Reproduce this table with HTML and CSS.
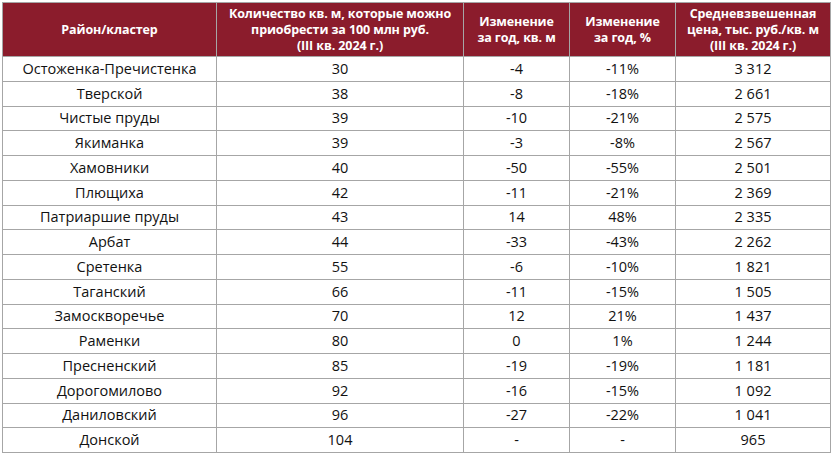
FILE: index.html
```html
<!DOCTYPE html>
<html lang="ru">
<head>
<meta charset="utf-8">
<link rel="stylesheet" href="styles.css">
</head>
<body>
<table class="tbl">
  <colgroup>
    <col class="c1"><col class="c2"><col class="c3"><col class="c4"><col class="c5">
  </colgroup>
  <thead>
    <tr>
      <th>Район/кластер</th>
      <th>Количество кв. м, которые можно<br>приобрести за 100 млн руб.<br>(III кв. 2024 г.)</th>
      <th>Изменение<br>за год, кв. м</th>
      <th>Изменение<br>за год, %</th>
      <th>Средневзвешенная<br>цена, тыс. руб./кв. м<br>(III кв. 2024 г.)</th>
    </tr>
  </thead>
  <tbody>
    <tr><td>Остоженка-Пречистенка</td><td>30</td><td>-4</td><td>-11%</td><td>3 312</td></tr>
    <tr><td>Тверской</td><td>38</td><td>-8</td><td>-18%</td><td>2 661</td></tr>
    <tr><td>Чистые пруды</td><td>39</td><td>-10</td><td>-21%</td><td>2 575</td></tr>
    <tr><td>Якиманка</td><td>39</td><td>-3</td><td>-8%</td><td>2 567</td></tr>
    <tr><td>Хамовники</td><td>40</td><td>-50</td><td>-55%</td><td>2 501</td></tr>
    <tr><td>Плющиха</td><td>42</td><td>-11</td><td>-21%</td><td>2 369</td></tr>
    <tr><td>Патриаршие пруды</td><td>43</td><td>14</td><td>48%</td><td>2 335</td></tr>
    <tr><td>Арбат</td><td>44</td><td>-33</td><td>-43%</td><td>2 262</td></tr>
    <tr><td>Сретенка</td><td>55</td><td>-6</td><td>-10%</td><td>1 821</td></tr>
    <tr><td>Таганский</td><td>66</td><td>-11</td><td>-15%</td><td>1 505</td></tr>
    <tr><td>Замоскворечье</td><td>70</td><td>12</td><td>21%</td><td>1 437</td></tr>
    <tr><td>Раменки</td><td>80</td><td>0</td><td>1%</td><td>1 244</td></tr>
    <tr><td>Пресненский</td><td>85</td><td>-19</td><td>-19%</td><td>1 181</td></tr>
    <tr><td>Дорогомилово</td><td>92</td><td>-16</td><td>-15%</td><td>1 092</td></tr>
    <tr><td>Даниловский</td><td>96</td><td>-27</td><td>-22%</td><td>1 041</td></tr>
    <tr><td>Донской</td><td>104</td><td>-</td><td>-</td><td>965</td></tr>
  </tbody>
</table>
</body>
</html>
```
FILE: styles.css
```css
html, body {
  margin: 0;
  padding: 0;
  background: #ffffff;
}
body {
  padding: 2px;
  font-family: "Open Sans", "Noto Sans", sans-serif;
}
.tbl {
  border-collapse: collapse;
  table-layout: fixed;
  width: 828px;
}
.c1 { width: 214px; }
.c2 { width: 247px; }
.c3 { width: 106px; }
.c4 { width: 106px; }
.c5 { width: 155px; }
.tbl th, .tbl td {
  border: 1px solid #a6a6a6;
  text-align: center;
  padding: 0;
}
.tbl th {
  background: #8b1c2c;
  color: #ffffff;
  font-weight: 700;
  font-size: 12.5px;
  line-height: 16px;
  height: 53px;
  letter-spacing: -0.1px;
}
.tbl td {
  font-size: 14.5px;
  line-height: 18px;
  height: 23.75px;
  color: #111111;
}
```
